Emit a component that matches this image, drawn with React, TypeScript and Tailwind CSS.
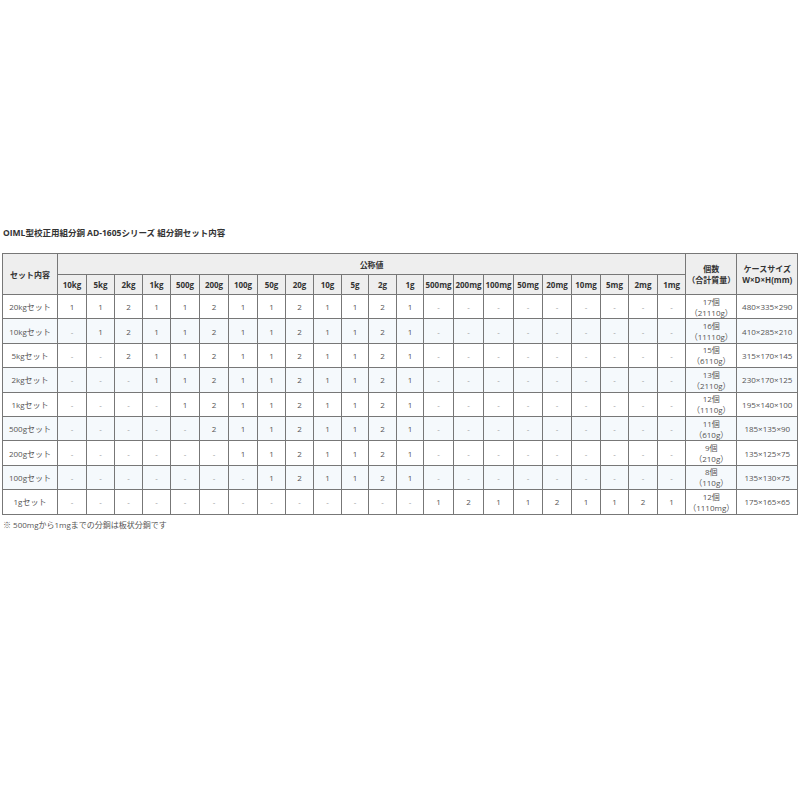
import React from 'react'

const weights = ['10kg', '5kg', '2kg', '1kg', '500g', '200g', '100g', '50g', '20g', '10g', '5g', '2g', '1g', '500mg', '200mg', '100mg', '50mg', '20mg', '10mg', '5mg', '2mg', '1mg']
const widths = [29, 28, 28, 28, 29, 29, 29, 28, 28, 28, 27, 28, 27, 30, 30, 30, 29, 29, 29, 28, 29, 28]

const g = ['1', '1', '2', '1', '1', '2', '1', '1', '2', '1', '1', '2', '1']
const dash = (n: number) => Array(n).fill('-')

const rows = [
  { name: '20kgセット', vals: [...g, ...dash(9)], count: '17個', total: '（21110g）', size: '480×335×290' },
  { name: '10kgセット', vals: ['-', ...g.slice(1), ...dash(9)], count: '16個', total: '（11110g）', size: '410×285×210' },
  { name: '5kgセット', vals: [...dash(2), ...g.slice(2), ...dash(9)], count: '15個', total: '（6110g）', size: '315×170×145' },
  { name: '2kgセット', vals: [...dash(3), ...g.slice(3), ...dash(9)], count: '13個', total: '（2110g）', size: '230×170×125' },
  { name: '1kgセット', vals: [...dash(4), ...g.slice(4), ...dash(9)], count: '12個', total: '（1110g）', size: '195×140×100' },
  { name: '500gセット', vals: [...dash(5), ...g.slice(5), ...dash(9)], count: '11個', total: '（610g）', size: '185×135×90' },
  { name: '200gセット', vals: [...dash(6), ...g.slice(6), ...dash(9)], count: '9個', total: '（210g）', size: '135×125×75' },
  { name: '100gセット', vals: [...dash(7), ...g.slice(7), ...dash(9)], count: '8個', total: '（110g）', size: '135×130×75' },
  { name: '1gセット', vals: [...dash(13), '1', '2', '1', '1', '2', '1', '1', '2', '1'], count: '12個', total: '（1110mg）', size: '175×165×65' },
]

export default function App() {
  return (
    <div className="w-[800px] h-[800px] bg-white pt-[227px] pl-[3px] text-[#555] [font-family:'Open_Sans','Noto_Sans_CJK_JP',sans-serif]">
      <h2 className="text-[8.5px] font-bold text-[#333] leading-[12px] mb-[14px]">
        OIML型校正用組分銅 AD-1605シリーズ 組分銅セット内容
      </h2>
      <table className="table-fixed border-collapse w-[795px] -ml-[1px] text-[8px] leading-[11px] text-center">
        <colgroup>
          <col className="w-[55px]" />
          {widths.map((w, i) => (
            <col key={i} style={{ width: w }} />
          ))}
          <col className="w-[51px]" />
          <col className="w-[61px]" />
        </colgroup>
        <thead className="bg-[#eeeeee] text-[#333] font-bold">
          <tr className="h-[21px]">
            <th rowSpan={2} className="border border-[#777]">セット内容</th>
            <th colSpan={22} className="border border-[#777]">公称値</th>
            <th rowSpan={2} className="border border-[#777]">
              個数
              <br />
              （合計質量）
            </th>
            <th rowSpan={2} className="border border-[#777]">
              ケースサイズ
              <br />
              W×D×H(mm)
            </th>
          </tr>
          <tr className="h-[20px]">
            {weights.map((w) => (
              <th key={w} className="border border-[#777] px-0">{w}</th>
            ))}
          </tr>
        </thead>
        <tbody>
          {rows.map((r, i) => (
            <tr key={r.name} className={`h-[24.4px] ${i % 2 === 1 ? 'bg-[#f5f9fc]' : 'bg-white'}`}>
              <td className="border border-[#777]">{r.name}</td>
              {r.vals.map((v, j) => (
                <td key={j} className={`border border-[#777] ${v === '-' ? 'text-[#999]' : ''}`}>{v}</td>
              ))}
              <td className="border border-[#777]">
                {r.count}
                <br />
                {r.total}
              </td>
              <td className="border border-[#777]">{r.size}</td>
            </tr>
          ))}
        </tbody>
      </table>
      <p className="text-[8px] leading-[11px] mt-[4px] text-[#555]">※ 500mgから1mgまでの分銅は板状分銅です</p>
    </div>
  )
}
